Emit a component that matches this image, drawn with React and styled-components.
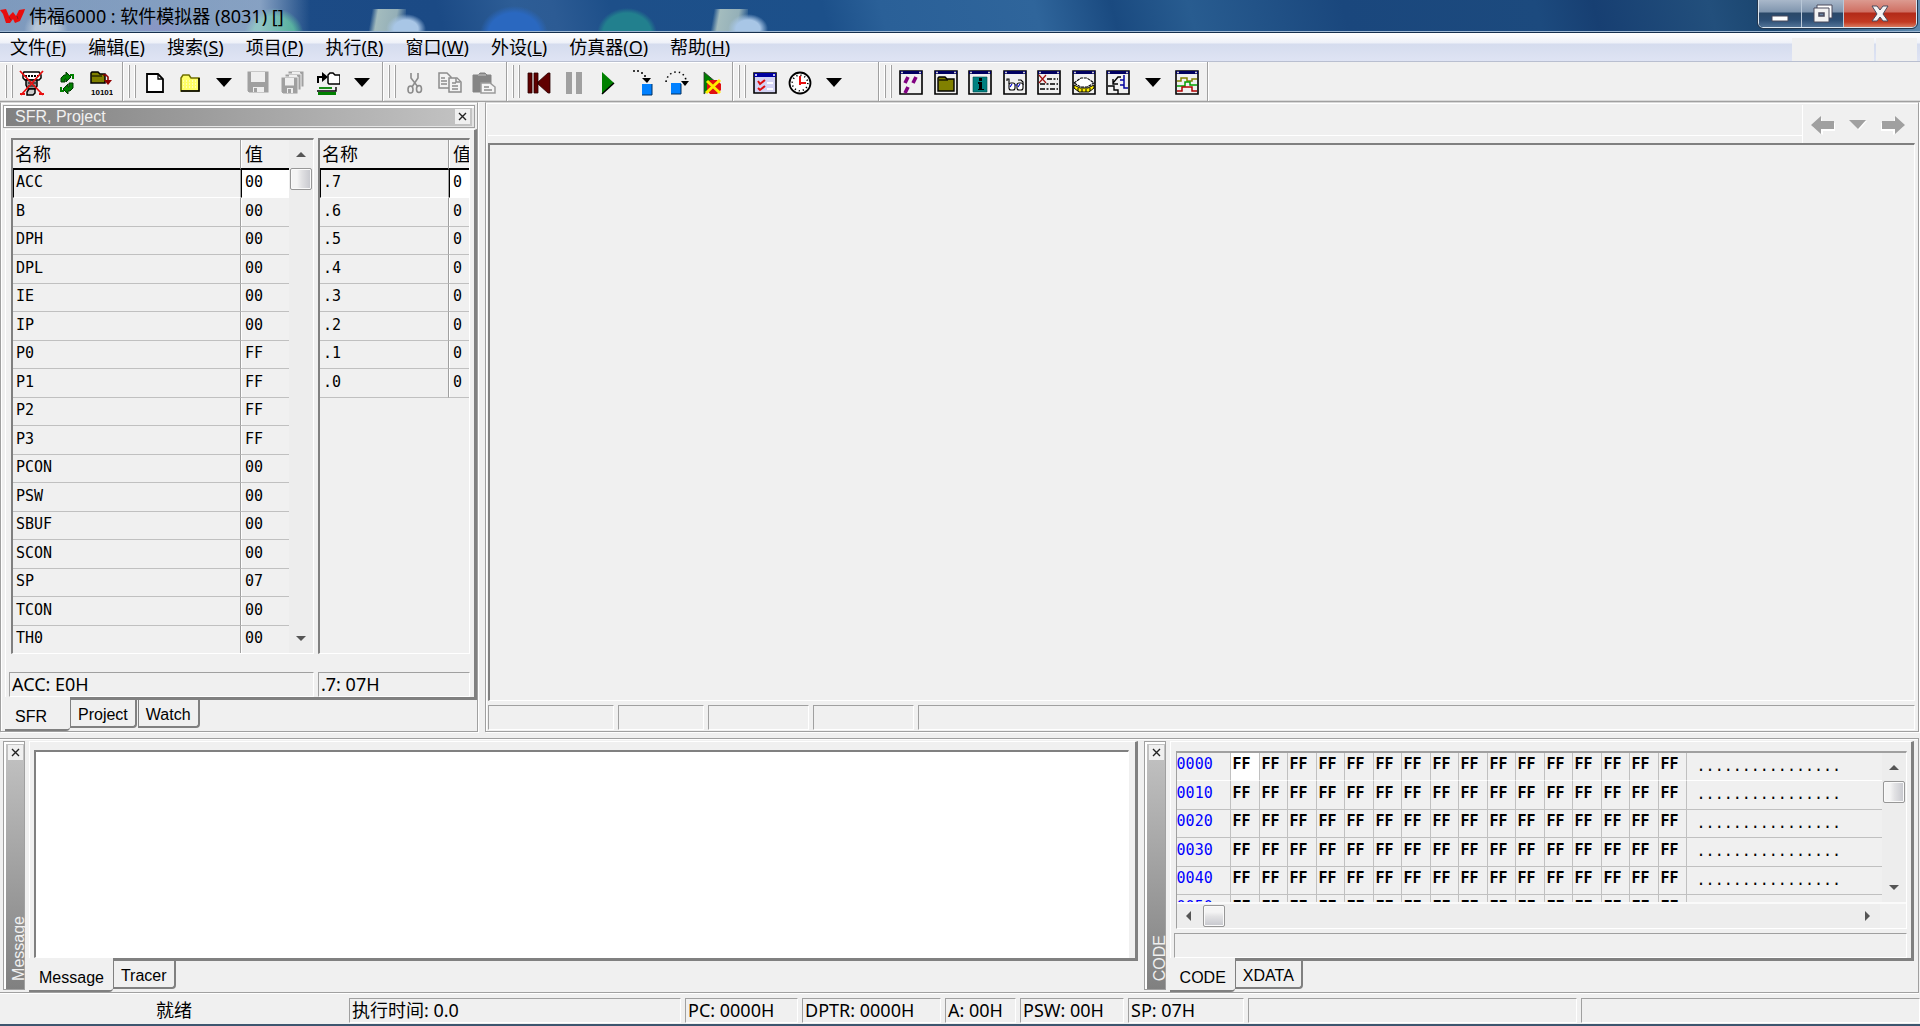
import React from 'react';
import styled, { createGlobalStyle, css } from 'styled-components';

const FACE = '#f0f0f0';
const LINE = '#a0a0a0';
const DARK = '#808080';
const GRID = '#c0c0c0';
const UI_FONT = '"Noto Sans", "Noto Sans CJK SC", sans-serif';
const TAB_FONT = '"Liberation Sans", sans-serif';
const MONO_FONT = '"DejaVu Sans Mono", "Noto Sans CJK SC", monospace';

const GlobalStyle = createGlobalStyle`
  * {
    box-sizing: border-box;
  }
  body {
    margin: 0;
    overflow: hidden;
    background: ${FACE};
    color: #000;
    font: 18px/24px ${UI_FONT};
  }
  button {
    margin: 0;
    padding: 0;
    border: 0;
    background: none;
    color: inherit;
    font: inherit;
  }
  svg {
    display: block;
  }
`;

const Window = styled.div`
  display: flex;
  flex-direction: column;
  height: 100vh;
  border-bottom: 2px solid #3d566f;
`;

/* ---------- title bar ---------- */

const TitleBar = styled.header`
  display: flex;
  flex: none;
  justify-content: space-between;
  height: 33px;
  border-bottom: 1px solid #16304e;
  box-shadow: inset 0 -1px 0 #9fb9d4;
  background:
    linear-gradient(90deg, rgba(190, 205, 225, 0.6) 0, rgba(205, 218, 235, 0.6) 260px, transparent 310px),
    radial-gradient(ellipse 22px 20px at 46px 30px, rgba(225, 230, 225, 0.7) 50%, transparent),
    radial-gradient(ellipse 32px 26px at 160px 38px, rgba(50, 50, 150, 0.7) 50%, transparent),
    radial-gradient(ellipse 30px 28px at 274px 36px, rgba(60, 175, 140, 0.9) 70%, transparent),
    radial-gradient(ellipse 20px 15px at 406px 29px, #a8c6e6 60%, transparent),
    linear-gradient(100deg, transparent 10%, rgba(178, 200, 196, 0.9) 25%, rgba(178, 200, 196, 0.8) 70%, transparent 95%) 368px 9px / 38px 24px no-repeat,
    radial-gradient(ellipse 34px 28px at 514px 34px, #2a68c0 75%, transparent),
    radial-gradient(ellipse 30px 26px at 627px 34px, #22808e 80%, transparent),
    radial-gradient(ellipse 20px 15px at 748px 29px, #a8c6e6 60%, transparent),
    linear-gradient(100deg, transparent 10%, rgba(178, 200, 196, 0.9) 25%, rgba(178, 200, 196, 0.8) 70%, transparent 95%) 710px 9px / 38px 24px no-repeat,
    linear-gradient(75deg, #1e4d87 0, #1b4a85 23%, #2d5d96 27%, #2c5b94 29%, #1d4f89 32%, #1c508a 43%, #2a6098 46%, #2f659b 54%, #1a4a80 58%, #285c90 62%, #1a477d 70%, #1c4a7e 80%, #173f72 83%, #224f7c 89%, #1a456f 92%, #5f8bb0 100%);
`;

const Title = styled.h1`
  display: flex;
  align-items: center;
  gap: 4px;
  margin: 0;
  font-size: 18px;
  font-weight: 400;
  line-height: 32px;
  white-space: pre;
`;

const WindowButtons = styled.div`
  display: flex;
  height: 28px;
  margin-right: 3px;
  border: 1px solid #dbe6f0;
  border-top: 0;
  border-radius: 0 0 5px 5px;
  outline: 1px solid #23364d;
  overflow: hidden;
`;

const WindowButton = styled.button`
  display: flex;
  align-items: center;
  justify-content: center;
  width: ${props => props.$close ? 73 : 42}px;
  border-left: ${props => props.$first ? '0' : '1px solid #b9c8d8'};
  background: ${props => props.$close ?
    'linear-gradient(#dc9a90 0, #cf6f62 12px, #b22a18 13px, #c33a22 22px, #dd8468 28px)' :
    'linear-gradient(#a9b8ca 0, #7f95ae 12px, #2a4868 13px, #2c4e74 20px, #56779b 28px)'};
`;

/* ---------- menu bar ---------- */

const MenuBar = styled.nav`
  display: flex;
  flex: none;
  height: 29px;
  padding-right: 3px;
  border-bottom: 1px solid #b9bfd0;
  background: linear-gradient(#fff 0, #eef1f8 10px, #d5dcee 11px, #dfe4f4 28px);
`;

const MenuItem = styled.button`
  padding: 0 12px 0 10px;
  line-height: 26px;
  white-space: nowrap;
`;

const MenuPatch = styled.span`
  width: ${props => props.$wide ? 82 : 41}px;
  height: 23px;
  margin: 5px 0 0 ${props => props.$wide ? 'auto' : '2px'};
  background: ${FACE};
`;

/* ---------- tool bar ---------- */

const ToolBar = styled.div`
  display: flex;
  flex: none;
  height: 40px;
  border-bottom: 1px solid ${LINE};
  box-shadow: inset 0 -1px 0 #d8d8d8;
`;

const ToolGroup = styled.div`
  display: flex;
  align-items: center;
  padding-right: ${props => props.$tail || 3}px;
  border-right: 1px solid ${LINE};
  box-shadow: inset 0 1px 0 #fff, 1px 0 0 #fff;
`;

const Grip = styled.span`
  width: 7px;
  height: 33px;
  margin: 0 2px 0 6px;
  border: solid ${LINE};
  border-width: 0 1px;
  box-shadow: -1px 0 0 #fff, inset -1px 0 0 #fff;
`;

const ToolButton = styled.button`
  display: flex;
  align-items: center;
  justify-content: center;
  width: 34px;
  height: 36px;
  padding-top: 2px;
  &:nth-child(odd) {
    width: 35px;
  }
`;

/* ---------- docked panels ---------- */

const Workspace = styled.main`
  display: flex;
  flex: 1;
  gap: 7px;
  min-height: 0;
`;

const Dock = styled.section`
  display: flex;
  flex: ${props => props.$width ? 'none' : '1'};
  flex-direction: column;
  width: ${props => props.$width ? `${props.$width}px` : 'auto'};
  min-width: 0;
  padding: 2px 0 0 4px;
  border: 1px solid ${LINE};
  border-top-color: #d8d8d8;
  box-shadow: inset 1px 1px 0 #fff, 1px 1px 0 #fff;
`;

const Caption = styled.div`
  display: flex;
  flex: none;
  align-items: center;
  justify-content: space-between;
  height: 23px;
  margin: 0 2px 1px -2px;
  padding: 0 4px 0 11px;
  border: 1px solid ${LINE};
  box-shadow: inset 2px 2px 0 #fff, inset -2px -1px 0 #e4e4e4;
  background: linear-gradient(90deg, #808080, #c4c4c4);
  color: #f0f0f0;
  font: 16px/20px ${TAB_FONT};
`;

const CloseButton = styled.button`
  display: flex;
  flex: none;
  align-items: center;
  justify-content: center;
  width: 15px;
  height: 15px;
  background: ${FACE};
`;

const SideCaption = styled.div`
  display: flex;
  flex: none;
  flex-direction: column;
  align-items: center;
  justify-content: space-between;
  width: 22px;
  margin-bottom: 2px;
  padding: 3px 0 8px 3px;
  border: 1px solid ${LINE};
  box-shadow: inset 2px 2px 0 #fff;
  background: linear-gradient(#c4c4c4, #808080);
  color: #f0f0f0;
`;

const SideText = styled.span`
  align-self: flex-end;
  writing-mode: vertical-rl;
  transform: rotate(180deg);
  font: 16px/10px ${TAB_FONT};
`;

const Page = styled.div`
  display: flex;
  flex: 1;
  flex-direction: column;
  min-height: 0;
  padding: ${props => props.$pad};
  border: solid;
  border-width: 1px 3px 3px 1px;
  border-color: #fff ${DARK} ${DARK} #fff;
`;

const Tabs = styled.div`
  display: flex;
  flex: none;
  align-items: flex-start;
  height: 31px;
  font: 16px/22px ${TAB_FONT};
`;

const Tab = styled.button`
  flex: none;
  margin-right: 1px;
  padding: 4px 7px 0 8px;
  border: solid ${DARK};
  border-width: 0 2px 2px 0;
  border-radius: 0 0 4px 0;
  background: ${FACE};
  box-shadow: inset 1px 0 0 ${DARK};
  ${props => props.$active && css`
    margin: -3px 0 0;
    padding: 9px ${props.$tight ? 9 : 23}px 1px 10px;
    border-right-width: 0;
    box-shadow: none;
  `}
`;

/* ---------- register tables ---------- */

const Tables = styled.div`
  display: flex;
  flex: 1;
  gap: 4px;
  min-height: 0;
`;

const Sunken = styled.div`
  display: flex;
  flex: ${props => props.$width ? 'none' : '1'};
  width: ${props => props.$width ? `${props.$width}px` : 'auto'};
  min-width: 0;
  overflow: hidden;
  border: solid;
  border-width: 2px 1px 1px 2px;
  border-color: ${DARK} #fff #fff ${DARK};
`;

const RegisterTable = styled.table`
  flex: 1;
  align-self: flex-start;
  width: 100%;
  min-width: 0;
  table-layout: fixed;
  border-collapse: separate;
  border-spacing: 0;
  font: 15px/18px ${MONO_FONT};
  overflow: hidden;

  th {
    height: 30px;
    padding: 0 0 2px 2px;
    border-bottom: 2px solid #000;
    font: 18px/24px "Noto Sans CJK SC", sans-serif;
    text-align: left;
    white-space: nowrap;
  }
  td {
    height: 29px;
    padding: 0 0 3px 3px;
    border-bottom: 1px solid ${GRID};
  }
  tr:nth-child(odd) td {
    height: 28px;
  }
  th:first-child,
  td:first-child {
    border-right: 1px solid ${LINE};
    box-shadow: 1px 0 0 #fff;
  }
  th + th,
  td + td {
    padding-left: 4px;
  }
  tbody tr:first-child td {
    border-bottom-color: #fff;
    border-left: 1px solid #000;
    padding-left: 2px;
  }
  tbody tr:first-child td + td {
    background: #fff;
    padding-left: 3px;
  }
`;

const ScrollBar = styled.div`
  display: flex;
  flex: none;
  flex-direction: ${props => props.$horizontal ? 'row' : 'column'};
  align-items: center;
  ${props => props.$horizontal ? 'height: 24px;' : 'width: 24px;'}
  padding: ${props => props.$horizontal ? '0 6px 0 5px' : '8px 0'};
  background: #ededed;
`;

const ScrollArrow = styled.button`
  flex: none;
  &:last-child {
    margin: ${props => props.$horizontal ? '0 0 0 auto' : 'auto 0 0'};
  }
`;

const Thumb = styled.span`
  flex: none;
  width: 22px;
  height: 22px;
  margin: ${props => props.$horizontal ? '0 9px' : '8px 0'};
  border: 1px solid #979797;
  border-radius: 2px;
  box-shadow: inset 0 0 0 1px #fafafa;
  background: linear-gradient(${props => props.$horizontal ? '180deg' : '90deg'}, #f4f4f4 30%, #e2e2e4 52%, #c6c7cd);
`;

const HintRow = styled.div`
  display: flex;
  flex: none;
  gap: 4px;
  margin: ${props => props.$margin};
`;

const Well = styled.div`
  flex: ${props => props.$width ? 'none' : '1'};
  width: ${props => props.$width ? `${props.$width}px` : 'auto'};
  min-width: 0;
  height: 25px;
  padding-left: 2px;
  border: solid;
  border-width: 1px;
  border-color: ${LINE} #fff #fff ${LINE};
  line-height: 23px;
  white-space: nowrap;
`;

/* ---------- editor area ---------- */

const Editor = styled(Dock)`
  margin-right: 1px;
  padding: 2px 3px 1px 2px;
`;

const EditorTop = styled.div`
  display: flex;
  flex: none;
  justify-content: flex-end;
  height: 38px;
`;

const EditorNav = styled.div`
  display: flex;
  align-items: center;
  gap: 14px;
  padding: 2px 10px 0 8px;
  border-left: 1px solid #fff;
`;

const EditorStrip = styled.div`
  flex: 1;
  height: 31px;
  border-bottom: 1px solid #fff;
`;

const EditorBody = styled.div`
  flex: 1;
  border: solid;
  border-width: 2px 1px 1px 2px;
  border-color: ${DARK} #fff #fff ${DARK};
`;

/* ---------- message and memory panels ---------- */

const BottomRow = styled.div`
  display: flex;
  flex: none;
  gap: 6px;
  height: 255px;
  margin: 6px 1px 0 0;
  padding: 2px 4px 0 3px;
  border: 1px solid ${LINE};
  border-left: 0;
  box-shadow: inset 0 1px 0 #fff, 0 1px 0 #fff;
`;

const BottomDock = styled.section`
  display: flex;
  flex: ${props => props.$grow};
  gap: 4px;
  min-width: 0;
`;

const Stack = styled.div`
  display: flex;
  flex: 1;
  flex-direction: column;
  min-width: 0;
`;

const Output = styled.textarea`
  flex: 1;
  resize: none;
  outline: 0;
  border: solid;
  border-width: 2px 1px 1px 2px;
  border-color: ${DARK} #fff #fff ${DARK};
  border-radius: 0;
  background: #fff;
`;

const MemoryFrame = styled.div`
  display: flex;
  flex: 1;
  flex-direction: column;
  min-height: 0;
  border: solid;
  border-width: 2px 1px 1px;
  border-color: ${LINE} #fff #fff ${LINE};
`;

const MemoryView = styled.div`
  display: flex;
  flex: 1;
  min-height: 0;
  overflow: hidden;
`;

const MemoryTable = styled.table`
  flex: 1;
  align-self: flex-start;
  table-layout: fixed;
  border-collapse: separate;
  border-spacing: 0;
  font: 15px/18px ${MONO_FONT};

  th,
  td {
    height: 29px;
    padding: 0 0 5px 2px;
    border: solid ${GRID};
    border-width: 0 1px 1px 0;
    text-align: left;
  }
  tr:nth-child(odd) > * {
    height: 28px;
  }
  th {
    padding-left: 0;
    color: #0000ff;
    font-weight: 400;
  }
  td:last-child {
    padding: 0 0 2px 10px;
    border-right: 0;
  }
  tr:first-child > * {
    border-bottom-color: #fff;
  }
  tr:first-child th + td {
    background: #fff;
  }
`;

const HexCell = styled.td`
  font-weight: 700;
`;

const HScrollRow = styled.div`
  display: flex;
  flex: none;
  padding-right: 26px;
  border-top: 2px solid #fafafa;
  & > div {
    flex: 1;
  }
`;

/* ---------- status bar ---------- */

const StatusBar = styled.footer`
  display: flex;
  flex: none;
  gap: 4px;
  padding: 5px 0 1px;
`;

const Ready = styled.div`
  flex: none;
  width: 345px;
  padding-left: 156px;
`;

/* ---------- icons ---------- */

const Icon = ({ children, width = 24, height = 26 }) => (
  <svg width={width} height={height} viewBox={`0 0 ${width} ${height}`} aria-hidden="true">
    {children}
  </svg>
);

const Logo = () => (
  <Icon width={25} height={16}>
    <path d="M0 2l6-1 3 7 4-4 3 4 3-6 6-1-1 3-4 9-5 2-2-4-3 4-4 0-3-9z" fill="#e80d0d" />
    <path d="M9 9l2 3M17 8l1 3" stroke="#8a1c1c" strokeWidth="1" />
  </Icon>
);

const CloseMark = () => (
  <Icon width={9} height={9}>
    <path d="M1 1l7 7M8 1l-7 7" stroke="#222" strokeWidth="1.4" />
  </Icon>
);

const DropDown = () => (
  <Icon width={18} height={10}>
    <path d="M1 0h16L9 9z" fill="#000" />
  </Icon>
);

const NoEmulator = () => (
  <Icon width={26}>
    <path d="M5 2h15l2 3v3l-2 2H6L4 8V4z" fill="#fff" stroke="#000" strokeWidth="1.5" />
    <path d="M6 6h14" stroke="#000" strokeWidth="2" strokeDasharray="2 1" />
    <path d="M7 10h11v6l-2 3H9l-2-4z" fill="#999" stroke="#000" strokeWidth="1.5" />
    <path d="M9 13h8M9 16h7" stroke="#000" strokeWidth="1" />
    <path d="M10 19h6v4l-2 2H8v-3z" fill="#ccc" stroke="#000" strokeWidth="1.5" />
    <path d="M1 1l23 24M24 1L2 25M1 24h5M20 24h5" stroke="#e81010" strokeWidth="1.8" fill="none" />
  </Icon>
);

const Reload = () => (
  <Icon width={16} height={22}>
    <path d="M2 10V6l3-3h2V0l5 5-5 5V7H6v3z" fill="#008000" stroke="#003800" strokeWidth="1" />
    <path d="M14 11v5l-3 3H9v3l-5-5 5-5v3h1v-4z" fill="#008000" stroke="#003800" strokeWidth="1" />
    <path d="M11 3h3v4M5 19H2v-4" fill="none" stroke="#008000" strokeWidth="2" />
  </Icon>
);

const Compile = () => (
  <Icon>
    <path d="M2 13V3l1-1h6l2 2h5v9z" fill="#808000" stroke="#000" strokeWidth="1.5" />
    <path d="M3 6h10" stroke="#000" strokeWidth="1" />
    <path d="M14 5h3l2 2v5" fill="none" stroke="#900000" strokeWidth="1.6" />
    <path d="M15 10h8l-4 5z" fill="#900000" />
    <text x="2" y="25" fontFamily="Liberation Sans" fontSize="8" fontWeight="700">10101</text>
  </Icon>
);

const NewFile = () => (
  <Icon width={18} height={20}>
    <path d="M1 1h11l5 5v13H1z" fill="#fff" stroke="#000" strokeWidth="1.8" />
    <path d="M12 1v5h5" fill="none" stroke="#000" strokeWidth="1.3" />
  </Icon>
);

const OpenFolder = () => (
  <Icon width={20} height={18}>
    <path d="M1 17V4l2-3h6l2 3h8v13z" fill="#ffff66" stroke="#707000" strokeWidth="1.5" />
    <path d="M1 17h18V4" fill="none" stroke="#000" strokeWidth="1.5" />
    <path d="M3 7h14M3 10h14M3 13h14" stroke="#fff" strokeWidth="1" strokeDasharray="1 2" />
  </Icon>
);

const Disk = ({ x = 0, y = 0, size = 22 }) => (
  <g transform={`translate(${x} ${y})`}>
    <path d={`M0 0h${size}v${size}H2l-2-2z`} fill="#a0a0a0" stroke="#efefef" strokeWidth="1" />
    <path d={`M4 1h${size - 8}v${size / 2 - 1}H4z`} fill="#efefef" />
    <path d={`M6 ${size - 6}h${size - 11}v5H6z`} fill="#efefef" />
    <path d={`M7 ${size - 5}h3v4H7z`} fill="#a0a0a0" />
  </g>
);

const Save = () => (
  <Icon width={23} height={23}>
    <Disk />
  </Icon>
);

const SaveAll = () => (
  <Icon width={24} height={24}>
    <Disk x={7} y={0} size={16} />
    <Disk x={4} y={3} size={16} />
    <Disk x={0} y={6} size={17} />
  </Icon>
);

const OpenProject = () => (
  <Icon>
    <path d="M2 13V7h5" fill="none" stroke="#000" strokeWidth="2" />
    <path d="M6 2l6 5-6 5z" fill="#000" />
    <path d="M12 13V5l2-2h3l2 2h5v9H13z" fill="#fff" stroke="#000" strokeWidth="1.5" />
    <path d="M1 21h19v-4" fill="none" stroke="#000" strokeWidth="1.4" />
    <path d="M2 22h18v3H2z" fill="#008000" />
    <path d="M3 18h13" stroke="#008000" strokeWidth="1.8" />
  </Icon>
);

const Cut = () => (
  <Icon width={16} height={22}>
    <path d="M4 1v5l7 9M11 1v5l-6 9" fill="none" stroke="#8c8c8c" strokeWidth="1.6" />
    <ellipse cx="3.5" cy="17.5" rx="2.5" ry="3.5" fill="none" stroke="#8c8c8c" strokeWidth="1.6" />
    <ellipse cx="12" cy="17" rx="2.5" ry="3.5" fill="none" stroke="#8c8c8c" strokeWidth="1.6" />
  </Icon>
);

const Copy = () => (
  <Icon width={24} height={22}>
    <g fill="#f2f2f2" stroke="#8c8c8c" strokeWidth="1.5">
      <path d="M1 1h8l4 4v11H1z" />
      <path d="M3 6h4M3 9h6M3 12h6" />
      <path d="M11 6h8l4 4v10H11z" />
      <path d="M14 11h4M14 14h6M14 17h6M18 6v4h4" />
    </g>
  </Icon>
);

const Paste = () => (
  <Icon width={24} height={22}>
    <path d="M1 3h5l2-2h5l2 2h4v17H1z" fill="#858585" stroke="#858585" />
    <path d="M6 3h8" stroke="#c8c8c8" />
    <path d="M9 11h9l5 4v6H9z" fill="#f4f4f4" stroke="#9a9a9a" strokeWidth="1.5" />
    <path d="M12 15h5M12 18h8" stroke="#8c8c8c" strokeWidth="1.5" />
  </Icon>
);

const Reset = () => (
  <Icon width={24} height={22}>
    <path d="M1 1h4v20H1zM7 1h4v20H7zM23 1v20h-2L11 12v-2l10-9z" fill="#600000" stroke="#2a0000" strokeWidth="0.8" />
  </Icon>
);

const Pause = () => (
  <Icon width={18} height={22}>
    <path d="M1 0h6v22H1zM11 0h6v22h-6z" fill="#a0a0a0" />
  </Icon>
);

const Play = () => (
  <Icon width={14} height={24}>
    <path d="M1 1l12 11L1 23z" fill="#008000" />
    <path d="M13 12L1 23" stroke="#000" strokeWidth="1.5" />
  </Icon>
);

const StepInto = () => (
  <Icon width={22} height={26}>
    <path d="M1 1h2M5 1h2M9 3h2M12 6h2" stroke="#000" strokeWidth="1.6" />
    <path d="M10 8h9l-4 5z" fill="#000" />
    <path d="M10 14h10v11H10z" fill="#0080ff" />
    <path d="M20 14v11H10" fill="none" stroke="#003060" strokeWidth="1" />
  </Icon>
);

const StepOver = () => (
  <Icon width={24} height={24}>
    <path d="M1 11C2 4 7 1 12 1s8 4 9 8" fill="none" stroke="#000" strokeWidth="1.6" strokeDasharray="1.5 3" />
    <path d="M16 10h8l-4 5z" fill="#000" />
    <path d="M6 12h10v11H6z" fill="#0080ff" />
    <path d="M16 13v10H6" fill="none" stroke="#003060" strokeWidth="1" />
  </Icon>
);

const StopRun = () => (
  <Icon width={20} height={24}>
    <path d="M2 1l13 11L2 23z" fill="#008000" stroke="#303030" strokeWidth="0.8" />
    <path d="M8 9h7l4 4v6l-4 4H8l-3-4v-6z" fill="#e01010" />
    <path d="M5 10l13 12M18 9L4 22" stroke="#ffee00" strokeWidth="3" />
  </Icon>
);

const Options = () => (
  <Icon width={24} height={22}>
    <path d="M1 1h22v20H1z" fill="#d4d4f4" stroke="#000" strokeWidth="1.6" />
    <path d="M1 1h22v4H1z" fill="#0000a0" />
    <path d="M2 3h2M20 3h2" stroke="#fff" strokeWidth="1.5" />
    <path d="M5 9l2 3 5-4M5 16l2 2 5-4" fill="none" stroke="#e01010" strokeWidth="2" />
    <path d="M14 11h6M14 17h6" stroke="#fff" strokeWidth="2" />
  </Icon>
);

const Clock = () => (
  <Icon width={24} height={24}>
    <circle cx="12" cy="12" r="10.5" fill="#fff" stroke="#000" strokeWidth="1.8" />
    <circle cx="12" cy="12" r="7.8" fill="none" stroke="#000" strokeWidth="1.6" strokeDasharray="1.2 2.9" />
    <path d="M12 5v9M11 12h7" stroke="#e81010" strokeWidth="2" />
  </Icon>
);

const Framed = ({ children }) => (
  <Icon width={24} height={26}>
    <path d="M1 1h22v23H1z" fill="#f0f0f0" stroke="#000" strokeWidth="1.6" />
    <path d="M1 1h22v3H1z" fill="#000060" />
    <path d="M2 2.5h2M20 2.5h2" stroke="#ccc" strokeWidth="1.5" />
    {children}
  </Icon>
);

const DisasmWindow = () => (
  <Framed>
    <path d="M9 7l-3 6M17 7l-3 6M9 17l-3 6" stroke="#800080" strokeWidth="3.6" />
  </Framed>
);

const ProjectWindow = () => (
  <Framed>
    <path d="M4 10V8l1-1h6l2 2h7v12H4z" fill="#808000" stroke="#000" strokeWidth="1.4" />
    <path d="M5 10h9" stroke="#000" strokeWidth="1.2" />
  </Framed>
);

const InfoWindow = () => (
  <Framed>
    <path d="M5 7h14v15H5z" fill="#008080" stroke="#004a4a" strokeWidth="0.6" />
    <path d="M11 8h3v3h-3zM10 12h4v7h2v1h-6v-1h1v-5h-1z" fill="#000" />
  </Framed>
);

const WatchWindow = () => (
  <Framed>
    <path d="M4 11V9h2v5M15 10h3l2 2v3" fill="none" stroke="#000" strokeWidth="1.1" />
    <rect x="6" y="13" width="6" height="7" rx="2" fill="#fff" stroke="#000" strokeWidth="1.1" />
    <rect x="14" y="13" width="6" height="7" rx="2" fill="#fff" stroke="#000" strokeWidth="1.1" />
    <path d="M12 15h2M9 14l-2 3M17 14l-2 3" stroke="#0000d0" strokeWidth="1.2" />
  </Framed>
);

const TraceWindow = () => (
  <Framed>
    <path d="M2 5l7 8M9 5l-7 8" stroke="#a01010" strokeWidth="1.2" />
    <path d="M10 9h11M3 14h18M3 19h18" stroke="#000" strokeWidth="1.3" strokeDasharray="5 1.5 2 1.5" />
  </Framed>
);

const StackWindow = () => (
  <Framed>
    <path d="M2 15l6 3h8l6-3v3l-5 4H7l-5-4z" fill="#ffee00" stroke="#000" strokeWidth="1" />
    <path d="M6 18v3M10 19v3M14 19v3M18 18v3" stroke="#000" strokeWidth="1" />
    <path d="M2 13l7-5h6l7 5-7 4H9z" fill="#fff" stroke="#000" strokeWidth="1.1" strokeDasharray="3 0.8" />
  </Framed>
);

const PortWindow = () => (
  <Framed>
    <path d="M15 7h-3L7 13M7 9v5h5M2 16h6v4h4v4" fill="none" stroke="#000" strokeWidth="1.4" />
    <path d="M18 5v13h4M18 10h-4M18 15h-4" fill="none" stroke="#0000a0" strokeWidth="1.5" />
  </Framed>
);

const WaveWindow = () => (
  <Framed>
    <path d="M2 11h4V8h6v3h5V9h5" fill="none" stroke="#808000" strokeWidth="1.5" />
    <path d="M2 16h8v-4h5v3h7" fill="none" stroke="#00a000" strokeWidth="1.5" />
    <path d="M2 21h5v-4h10v4h5" fill="none" stroke="#b00000" strokeWidth="1.5" />
  </Framed>
);

const ScrollMark = ({ direction }) => {
  const turn = { up: 0, right: 90, down: 180, left: 270 }[direction];
  return (
    <Icon width={12} height={12}>
      <path d="M1 9l5-5 5 5z" fill="#555" transform={`rotate(${turn} 6 6)`} />
    </Icon>
  );
};

const NavArrow = ({ back }) => (
  <Icon width={24} height={19}>
    <g transform={back ? undefined : 'translate(24 0) scale(-1 1)'}>
      <path d="M2 11l9-9v5h13v8H12v4z" fill="#fff" />
      <path d="M0 9l10-9v5h13v8H10v5z" fill="#a0a0a0" />
    </g>
  </Icon>
);

/* ---------- data ---------- */

const menus = [
  ['文件', 'F'], ['编辑', 'E'], ['搜索', 'S'], ['项目', 'P'], ['执行', 'R'],
  ['窗口', 'W'], ['外设', 'L'], ['仿真器', 'O'], ['帮助', 'H']
];

const toolGroups = [
  { tail: 4, tools: [['Emulator', NoEmulator], ['Reload', Reload], ['Compile', Compile]] },
  {
    tools: [
      ['New', NewFile], ['Open', OpenFolder], ['Recent files', DropDown], ['Save', Save],
      ['Save all', SaveAll], ['Open project', OpenProject], ['Recent projects', DropDown]
    ]
  },
  { tail: 5, tools: [['Cut', Cut], ['Copy', Copy], ['Paste', Paste]] },
  {
    tools: [
      ['Reset', Reset], ['Pause', Pause], ['Run', Play],
      ['Step into', StepInto], ['Step over', StepOver], ['Stop', StopRun]
    ]
  },
  { tail: 27, tools: [['Options', Options], ['Timer', Clock], ['Peripherals', DropDown]] },
  {
    tools: [
      ['Disassembly', DisasmWindow], ['Project window', ProjectWindow], ['Info', InfoWindow],
      ['Watch window', WatchWindow], ['Trace', TraceWindow], ['Stack', StackWindow],
      ['Ports', PortWindow], ['More windows', DropDown], ['Wave', WaveWindow]
    ]
  }
];

const registers = [
  ['ACC', '00'], ['B', '00'], ['DPH', '00'], ['DPL', '00'], ['IE', '00'], ['IP', '00'],
  ['P0', 'FF'], ['P1', 'FF'], ['P2', 'FF'], ['P3', 'FF'], ['PCON', '00'], ['PSW', '00'],
  ['SBUF', '00'], ['SCON', '00'], ['SP', '07'], ['TCON', '00'], ['TH0', '00']
];

const bits = ['.7', '.6', '.5', '.4', '.3', '.2', '.1', '.0'].map(name => [name, '0']);

const addresses = ['0000', '0010', '0020', '0030', '0040', '0050'];
const bytes = Array(16).fill('FF');

const statusCells = [
  ['执行时间: 0.0', 332], ['PC: 0000H', 113], ['DPTR: 0000H', 139], ['A: 00H', 71],
  ['PSW: 00H', 104], ['SP: 07H', 116], ['', 329], ['', 0]
];

/* ---------- parts ---------- */

const Registers = ({ rows, nameWidth }) => (
  <RegisterTable>
    <colgroup>
      <col style={{ width: nameWidth }} />
      <col />
    </colgroup>
    <thead>
      <tr>
        <th>名称</th>
        <th>值</th>
      </tr>
    </thead>
    <tbody>
      {rows.map(([name, value]) => (
        <tr key={name}>
          <td>{name}</td>
          <td>{value}</td>
        </tr>
      ))}
    </tbody>
  </RegisterTable>
);

const Scroll = ({ horizontal }) => (
  <ScrollBar $horizontal={horizontal}>
    <ScrollArrow aria-label="Back" $horizontal={horizontal}>
      <ScrollMark direction={horizontal ? 'left' : 'up'} />
    </ScrollArrow>
    <Thumb $horizontal={horizontal} />
    <ScrollArrow aria-label="Forward" $horizontal={horizontal}>
      <ScrollMark direction={horizontal ? 'right' : 'down'} />
    </ScrollArrow>
  </ScrollBar>
);

const Close = () => (
  <CloseButton aria-label="Close">
    <CloseMark />
  </CloseButton>
);

const Side = ({ text }) => (
  <SideCaption>
    <Close />
    <SideText>{text}</SideText>
  </SideCaption>
);

const App = () => (
  <Window>
    <GlobalStyle />
    <TitleBar>
      <Title>
        <Logo />
        伟福6000 : 软件模拟器 (8031) []
      </Title>
      <WindowButtons>
        <WindowButton $first aria-label="Minimize">
          <Icon width={18} height={24}>
            <path d="M1 14h16v5H1z" fill="#fff" stroke="#4a4a5c" />
          </Icon>
        </WindowButton>
        <WindowButton aria-label="Restore">
          <Icon width={20} height={20}>
            <path d="M4 1h15v13H4z" fill="#fff" stroke="#4a4a5c" />
            <path d="M1 4h15v14H1z" fill="#f2f2f2" stroke="#4a4a5c" />
            <path d="M6 9h5v3H6z" fill="#6a86a4" stroke="#4a4a5c" strokeWidth="1.5" />
          </Icon>
        </WindowButton>
        <WindowButton $close aria-label="Close">
          <Icon width={18} height={18}>
            <path d="M1 1h5l3 4 3-4h5l-5 8 5 7h-5l-3-4-3 4H1l5-7z" fill="#f4f4f4" stroke="#4a4a5c" />
          </Icon>
        </WindowButton>
      </WindowButtons>
    </TitleBar>

    <MenuBar>
      {menus.map(([label, key]) => (
        <MenuItem key={key}>{label}(<u>{key}</u>)</MenuItem>
      ))}
      <MenuPatch $wide />
      <MenuPatch />
    </MenuBar>

    <ToolBar>
      {toolGroups.map(({ tools, tail }, index) => (
        <ToolGroup key={index} $tail={tail}>
          <Grip />
          {tools.map(([label, Glyph]) => (
            <ToolButton key={label} aria-label={label}>
              <Glyph />
            </ToolButton>
          ))}
        </ToolGroup>
      ))}
    </ToolBar>

    <Workspace>
      <Dock $width={478}>
        <Caption>
          SFR, Project
          <Close />
        </Caption>
        <Page $pad="8px 4px 0 5px">
          <Tables>
            <Sunken $width={303}>
              <Registers rows={registers} nameWidth={228} />
              <Scroll />
            </Sunken>
            <Sunken>
              <Registers rows={bits} nameWidth={129} />
            </Sunken>
          </Tables>
          <HintRow $margin="18px 0 0 -2px">
            <Well $width={305}>ACC: E0H</Well>
            <Well>.7: 07H</Well>
          </HintRow>
        </Page>
        <Tabs>
          <Tab $active>SFR</Tab>
          <Tab>Project</Tab>
          <Tab>Watch</Tab>
        </Tabs>
      </Dock>

      <Editor>
        <EditorTop>
          <EditorStrip />
          <EditorNav>
            <button aria-label="Back"><NavArrow back /></button>
            <button aria-label="History">
              <Icon width={18} height={10}>
                <path d="M2 1h16l-8 9z" fill="#fff" />
                <path d="M0 0h17L9 9z" fill="#a0a0a0" />
              </Icon>
            </button>
            <button aria-label="Forward"><NavArrow /></button>
          </EditorNav>
        </EditorTop>
        <EditorBody />
        <HintRow $margin="4px 0 0">
          <Well $width={126} />
          <Well $width={86} />
          <Well $width={101} />
          <Well $width={101} />
          <Well />
        </HintRow>
      </Editor>
    </Workspace>

    <BottomRow>
      <BottomDock $grow="1134 1 0">
        <Side text="Message" />
        <Stack>
          <Page $pad="8px 6px 0 4px">
            <Output aria-label="Message" readOnly />
          </Page>
          <Tabs>
            <Tab $active $tight>Message</Tab>
            <Tab>Tracer</Tab>
          </Tabs>
        </Stack>
      </BottomDock>
      <BottomDock $grow="770 1 0">
        <Side text="CODE" />
        <Stack>
          <Page $pad="9px 4px 0 5px">
            <MemoryFrame>
              <MemoryView>
                <MemoryTable>
                  <colgroup>
                    <col style={{ width: 54 }} />
                    {bytes.map((_, index) => (
                      <col key={index} style={{ width: index % 2 ? 28 : 29 }} />
                    ))}
                    <col />
                  </colgroup>
                  <tbody>
                    {addresses.map(address => (
                      <tr key={address}>
                        <th>{address}</th>
                        {bytes.map((value, index) => (
                          <HexCell key={index}>{value}</HexCell>
                        ))}
                        <td>................</td>
                      </tr>
                    ))}
                  </tbody>
                </MemoryTable>
                <Scroll />
              </MemoryView>
              <HScrollRow>
                <Scroll horizontal />
              </HScrollRow>
            </MemoryFrame>
            <HintRow $margin="4px 0 0 -2px">
              <Well />
            </HintRow>
          </Page>
          <Tabs>
            <Tab $active $tight>CODE</Tab>
            <Tab>XDATA</Tab>
          </Tabs>
        </Stack>
      </BottomDock>
    </BottomRow>

    <StatusBar>
      <Ready>就绪</Ready>
      {statusCells.map(([text, width], index) => (
        <Well key={index} $width={width}>{text}</Well>
      ))}
    </StatusBar>
  </Window>
);

export default App;
